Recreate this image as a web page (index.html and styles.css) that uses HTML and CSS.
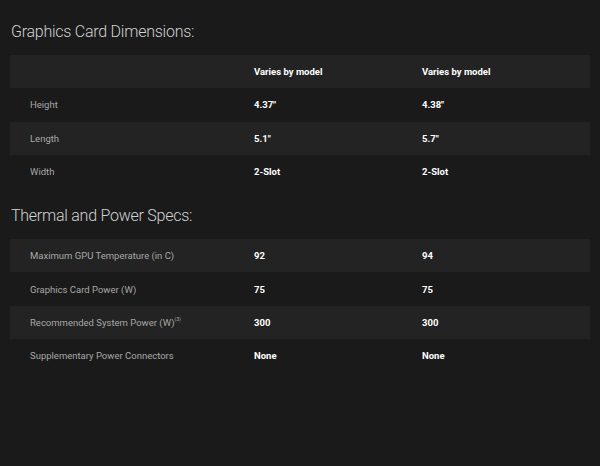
FILE: index.html
```html
<!DOCTYPE html>
<html>
<head>
<meta charset="utf-8">
<link rel="stylesheet" href="styles.css">
</head>
<body>
<div class="page">
  <h2 class="title">Graphics Card Dimensions:</h2>
  <table class="specs">
    <colgroup><col class="c1"><col class="c2"><col class="c3"></colgroup>
    <tr class="alt"><td></td><td class="val">Varies by model</td><td class="val">Varies by model</td></tr>
    <tr><td class="lbl">Height</td><td class="val">4.37"</td><td class="val">4.38"</td></tr>
    <tr class="alt"><td class="lbl">Length</td><td class="val">5.1"</td><td class="val">5.7"</td></tr>
    <tr><td class="lbl">Width</td><td class="val">2-Slot</td><td class="val">2-Slot</td></tr>
  </table>
  <h2 class="title second">Thermal and Power Specs:</h2>
  <table class="specs">
    <colgroup><col class="c1"><col class="c2"><col class="c3"></colgroup>
    <tr class="alt"><td class="lbl">Maximum GPU Temperature (in C)</td><td class="val">92</td><td class="val">94</td></tr>
    <tr><td class="lbl">Graphics Card Power (W)</td><td class="val">75</td><td class="val">75</td></tr>
    <tr class="alt"><td class="lbl">Recommended System Power (W)<sup>(3)</sup></td><td class="val">300</td><td class="val">300</td></tr>
    <tr><td class="lbl">Supplementary Power Connectors</td><td class="val">None</td><td class="val">None</td></tr>
  </table>
</div>
</body>
</html>
```

FILE: styles.css
```css
html, body {
  margin: 0;
  padding: 0;
  background: #1a1a1a;
  height: 100%;
}
.page {
  padding: 20px 10px 0 10px;
  font-family: "Roboto", "Liberation Sans", sans-serif;
}
.title {
  margin: 0 0 11px 1px;
  font-size: 16px;
  font-weight: 300;
  color: #d2d2d2;
  line-height: 24px;
  letter-spacing: -0.25px;
}
.second {
  margin-top: 16px;
}
.specs {
  width: 580px;
  border-collapse: collapse;
  table-layout: fixed;
}
.c1 { width: 224px; }
.c2 { width: 168px; }
.c3 { width: 188px; }
.specs td {
  height: 33.3px;
  padding: 0 0 0 20px;
  font-size: 9.5px;
  vertical-align: middle;
}
.specs tr.alt td {
  background: #232323;
}
.lbl {
  color: #a8a8a8;
}
.val {
  color: #ffffff;
  font-weight: 700;
}
sup {
  font-size: 5px;
  vertical-align: 5px;
  line-height: 0;
}
```
